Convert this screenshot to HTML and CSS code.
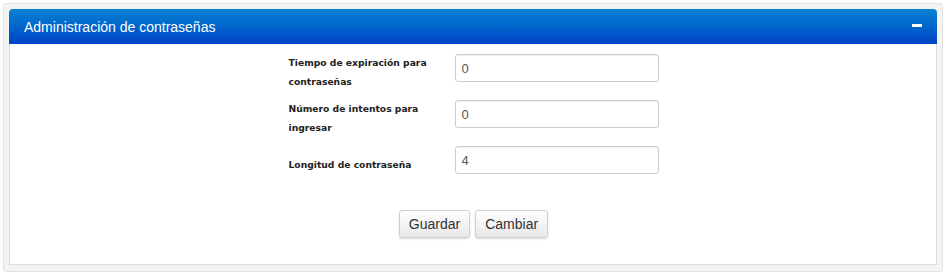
FILE: index.html
```html
<!DOCTYPE html>
<html lang="es">
<head>
  <meta charset="UTF-8">
  <title>Administración de contraseñas</title>
  <link rel="stylesheet" href="styles.css">
</head>
<body>
  <div class="wrap">
    <div class="panel">
      <div class="panel-head">
        <span class="panel-title">Administración de contraseñas</span>
        <span class="collapse"></span>
      </div>
      <div class="panel-body">
        <div class="form">
          <label class="lbl" for="exp">Tiempo de expiración para contraseñas</label>
          <input class="field" type="text" id="exp" value="0">

          <label class="lbl" for="intentos">Número de intentos para ingresar</label>
          <input class="field" type="text" id="intentos" value="0">

          <label class="lbl" for="longitud">Longitud de contraseña</label>
          <input class="field" type="text" id="longitud" value="4">
        </div>

        <div class="actions">
          <button class="btn">Guardar</button>
          <button class="btn">Cambiar</button>
        </div>
      </div>
    </div>
  </div>
</body>
</html>
```

FILE: styles.css
```css
body {
  margin: 0;
  padding: 3px;
  font-family: "Liberation Sans", Arial, sans-serif;
  background: #fff;
}
.wrap {
  height: 257px;
  border: 1px solid #e2e2e2;
  border-radius: 3px;
  background-color: #f4f4f4;
  padding: 5px;
}
.panel {
  height: 255px;
  background: #fff;
  border: 1px solid #dcdcdc;
  border-top: none;
  border-radius: 4px 4px 0 0;
}
.panel-head {
  height: 35px;
  display: flex;
  align-items: center;
  justify-content: space-between;
  padding: 0 15px 0 15px;
  margin: 0 -1px;
  border-radius: 4px 4px 0 0;
  background: linear-gradient(to bottom, #0a82d2 0%, #0066cc 50%, #0042c4 100%);
}
.panel-title {
  color: #fff;
  font-size: 14px;
}
.collapse {
  width: 10px;
  height: 3px;
  background: #fff;
  margin-top: -3px;
}
.panel-body {
  padding-top: 10px;
}
.form {
  display: grid;
  grid-template-columns: 160px 204px;
  grid-auto-rows: 28px;
  column-gap: 6px;
  row-gap: 18px;
  justify-content: center;
  padding-left: 1px;
}
.lbl {
  display: flex;
  align-items: center;
  height: 38px;
  margin-top: -1px;
  margin-bottom: -11px;
  font-family: "DejaVu Sans", Verdana, sans-serif;
  font-weight: bold;
  font-size: 9.2px;
  line-height: 19px;
  color: #222;
}
.field {
  box-sizing: border-box;
  width: 204px;
  height: 28px;
  padding: 4px 6px;
  border: 1px solid #ccc;
  border-radius: 3px;
  font-family: "Liberation Sans", Arial, sans-serif;
  font-size: 13px;
  color: #555;
  box-shadow: inset 0 1px 1px rgba(0, 0, 0, 0.06);
}
.actions {
  display: flex;
  justify-content: center;
  gap: 5px;
  margin-top: 36px;
  padding-left: 1px;
}
.btn {
  height: 28px;
  padding: 0 9px;
  border: 1px solid #d0d0d0;
  border-radius: 3px;
  background: linear-gradient(to bottom, #fff 0%, #e8e8e8 100%);
  box-shadow: 0 1px 2px rgba(0, 0, 0, 0.15);
  font-family: "Liberation Sans", Arial, sans-serif;
  font-size: 14px;
  color: #333;
}
```
